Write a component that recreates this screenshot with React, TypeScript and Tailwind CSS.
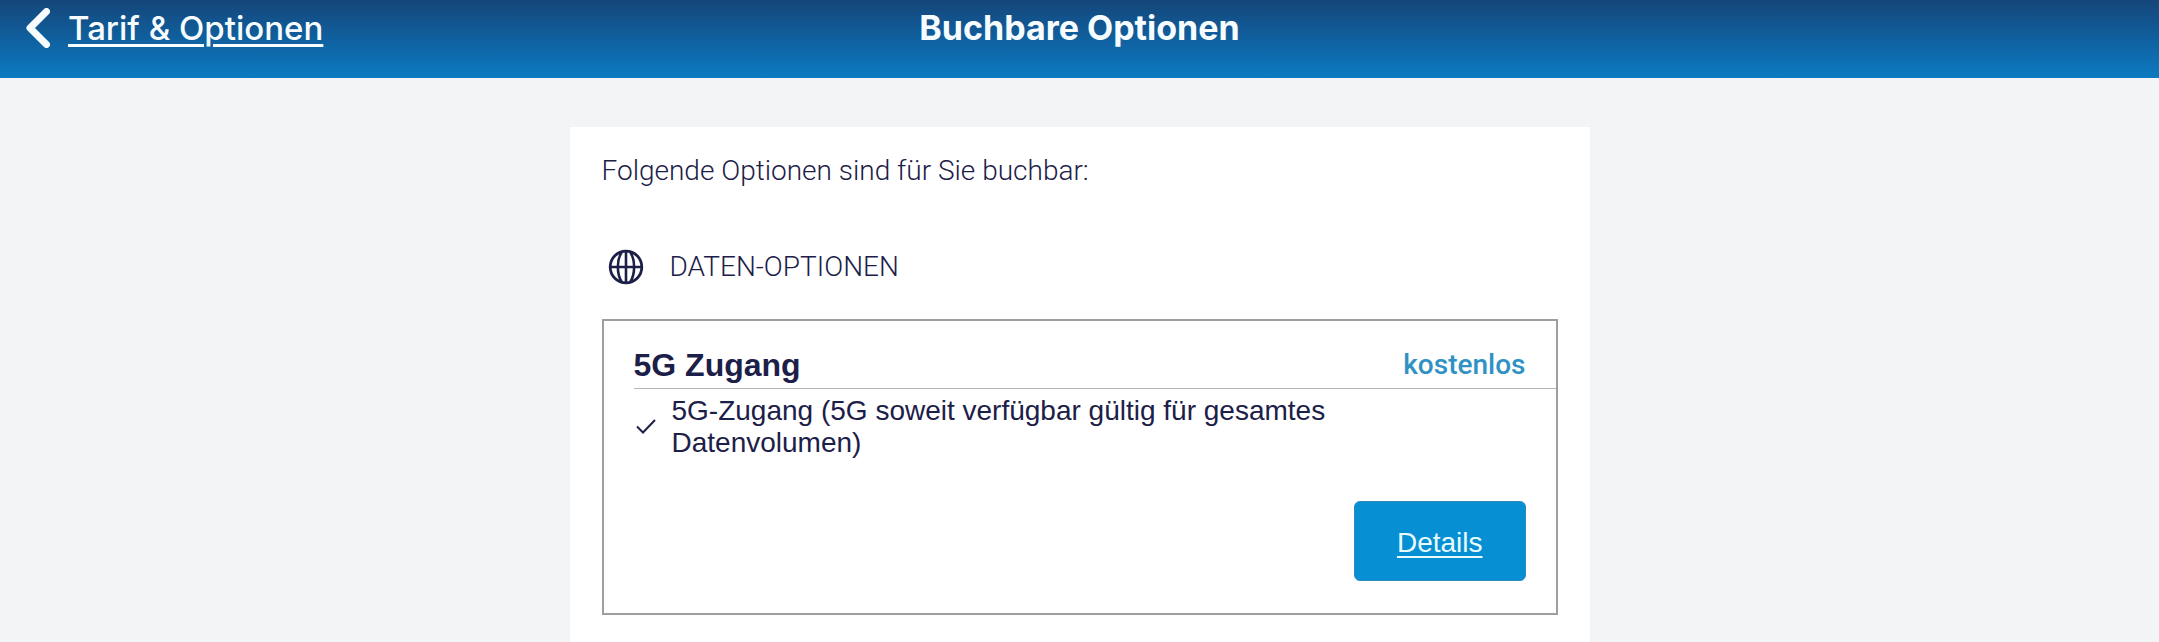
import React from "react";

const options = [
  {
    name: "5G Zugang",
    price: "kostenlos",
    features: ["5G-Zugang (5G soweit verfügbar gültig für gesamtes Datenvolumen)"],
  },
];

const BackIcon = () => (
  <svg width="24" height="40" viewBox="0 0 24 40" fill="none" aria-hidden="true">
    <path
      d="M20.5 3.5 4 20l16.500 16.500"
      stroke="currentColor"
      strokeWidth="7"
      strokeLinecap="round"
      strokeLinejoin="round"
    />
  </svg>
);

const GlobeIcon = () => (
  <svg
    width="36"
    height="36"
    viewBox="0 0 36 36"
    fill="none"
    stroke="currentColor"
    strokeWidth="2.6"
    aria-hidden="true"
  >
    <circle cx="18" cy="18" r="15.8" strokeWidth="2.8" />
    <path d="M18 2v32M2 18h32" />
    <path d="M14 2.800C8.500 10.500 8.500 25.500 14 33.200M22 2.800c5.500 7.700 5.500 22.700 0 30.400" />
  </svg>
);

const CheckIcon = () => (
  <svg
    width="20"
    height="16"
    viewBox="0 0 20 16"
    fill="none"
    stroke="currentColor"
    strokeWidth="2"
    className="shrink-0"
    aria-hidden="true"
  >
    <path d="M1 7.500l6 6L19 1" />
  </svg>
);

const Header = () => (
  <header className="grid grid-cols-[1fr_auto_1fr] items-center bg-linear-to-b from-[#14467a] via-[#0f609f] to-[#0c7bc1] px-[26px] pt-2 pb-[30px] font-[Inter,sans-serif] text-[34px] leading-10 text-[#f7fdff]">
    <a href="#tarif" className="flex items-center gap-[18px] justify-self-start text-[33px] font-medium">
      <BackIcon />
      <span className="underline decoration-3 underline-offset-4">Tarif &amp; Optionen</span>
    </a>
    <h1 className="font-bold">Buchbare Optionen</h1>
  </header>
);

const App = () => {
  return (
    <div className="flex min-h-screen flex-col bg-[#f2f4f6] font-['Liberation_Sans',Arial,sans-serif] text-[28px] leading-8 text-[#1c2048]">
      <Header />

      <main className="mx-auto mt-[49px] w-full max-w-[1020px] grow bg-white px-8 pt-7 pb-[27px]">
        <p className="font-[Roboto,sans-serif] font-light">
          Folgende Optionen sind für Sie buchbar:
        </p>

        <h2 className="mt-[62px] flex items-center gap-[26px] pl-[6px] font-[Roboto,sans-serif] font-light">
          <GlobeIcon />
          DATEN-OPTIONEN
        </h2>

        {options.map((option) => (
          <section key={option.name} className="mt-[34px] border-2 border-[#9b9f9f] pb-8 pl-[30px]">
            <div className="flex items-center justify-between border-b border-[#b4b7b8] pt-6 pr-[30px] pb-[3px]">
              <h3 className="text-[32px] leading-10 font-bold">{option.name}</h3>
              <span className="font-[Roboto,sans-serif] font-medium text-[#3091c4]">
                {option.price}
              </span>
            </div>

            <ul className="max-w-[720px] pt-[6px]">
              {option.features.map((feature) => (
                <li key={feature} className="flex items-center gap-4 pl-[2px]">
                  <CheckIcon />
                  {feature}
                </li>
              ))}
            </ul>

            <div className="mt-[42px] flex justify-end pr-[30px]">
              <a
                href="#details"
                className="rounded-md border border-[#2b8cc0] bg-[#068fd3] px-[42px] pt-[25px] pb-[21px] text-[#e9fbff] underline decoration-2 underline-offset-4"
              >
                Details
              </a>
            </div>
          </section>
        ))}
      </main>
    </div>
  );
};

export default App;
